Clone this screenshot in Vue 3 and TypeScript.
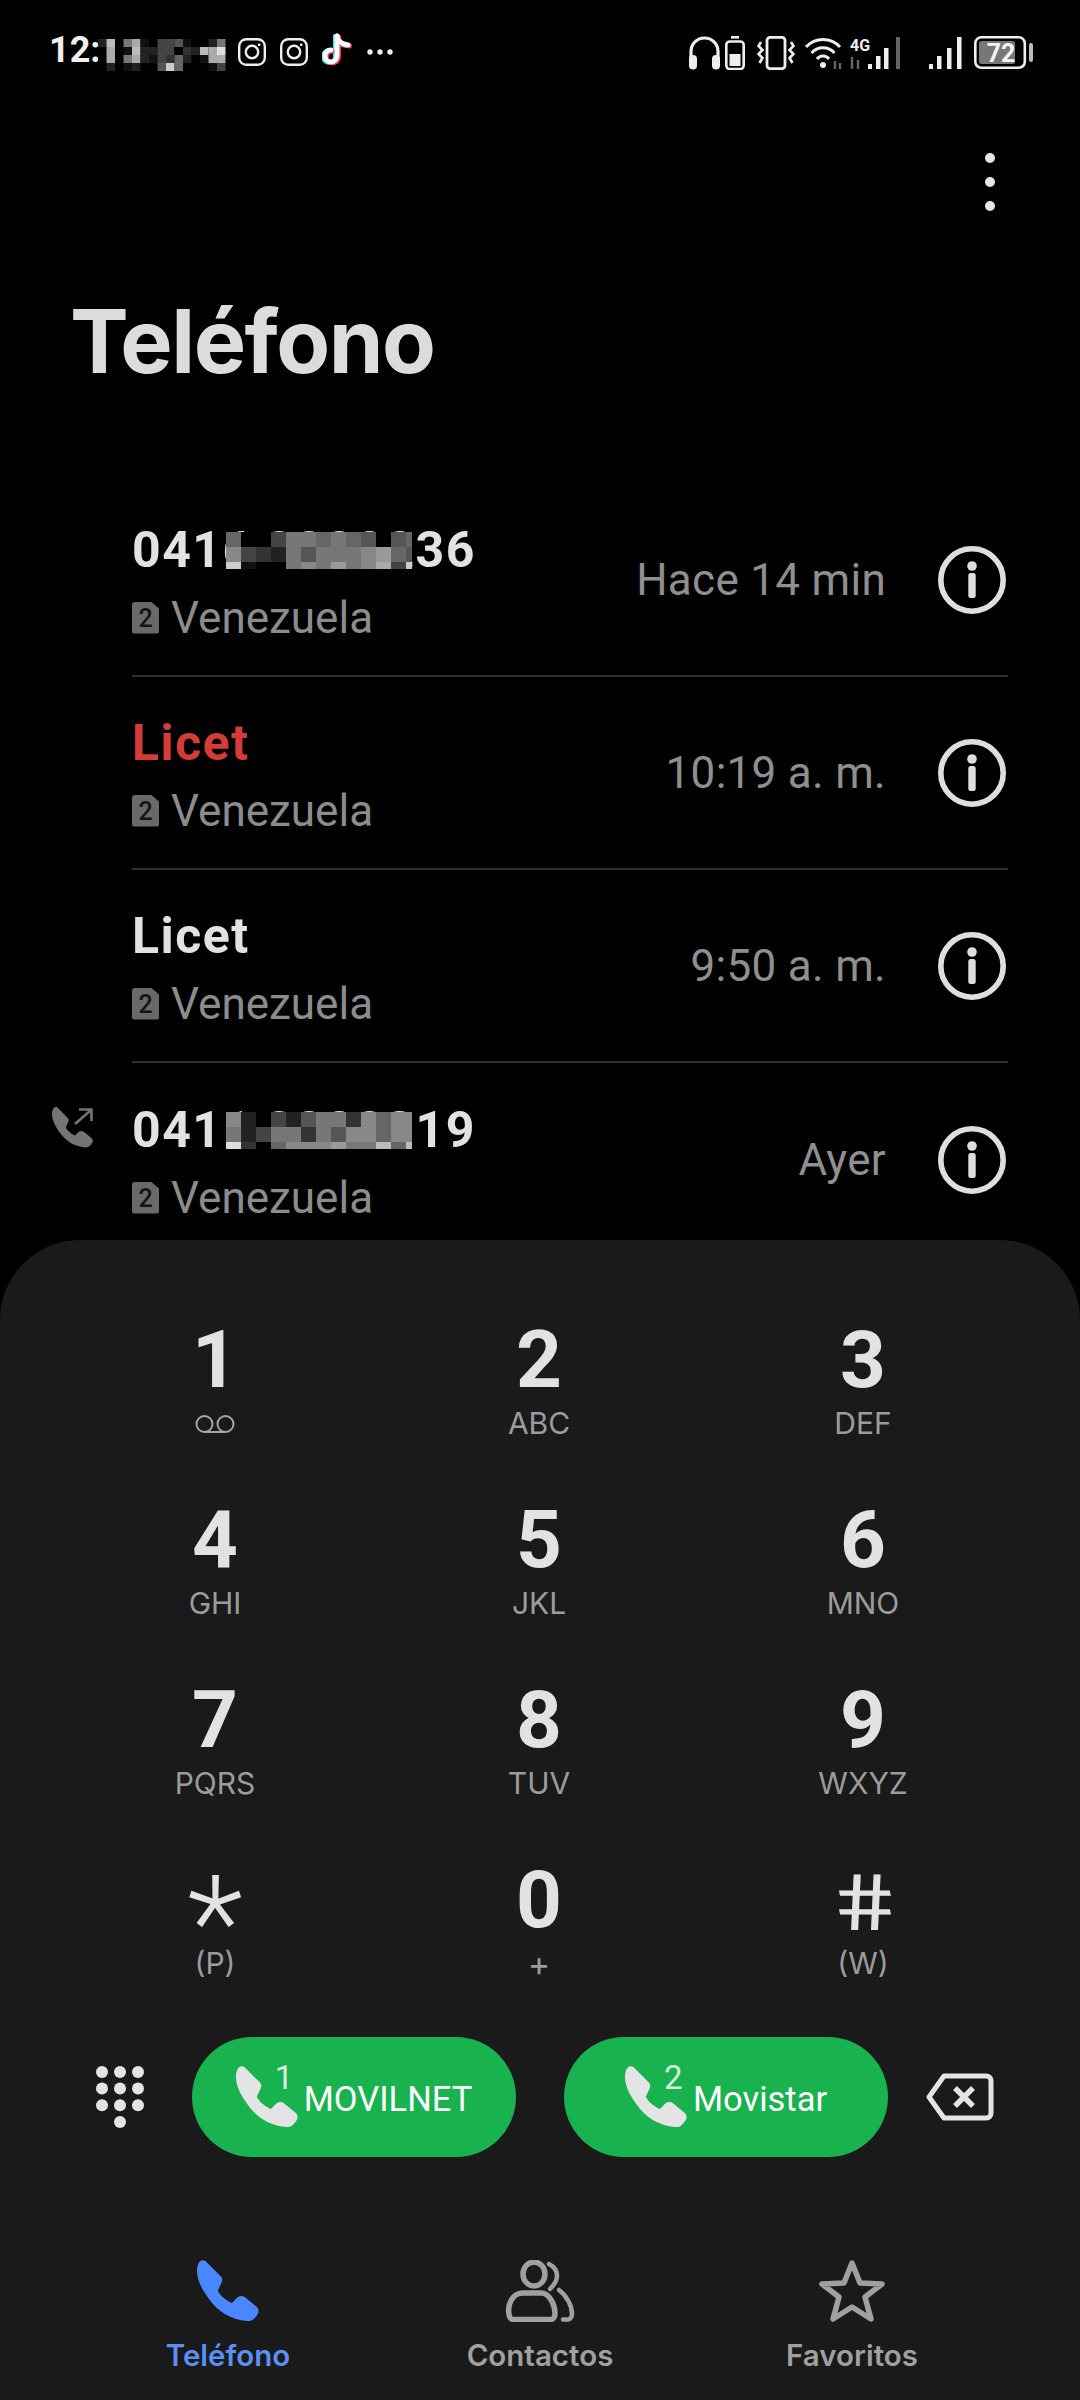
<script setup lang="ts">
const phone = 'M8 5C14-2 24 0 28 6L70 48C78 56 76 62 72 70L62 92C70 108 88 122 104 128L118 114C126 106 136 106 144 112L176 138C186 146 186 156 178 166C170 176 164 184 150 182C100 178 60 152 34 114C14 86 0 60 0 32C0 20 2 12 8 5Z'

interface Call { name: string; time: string; missed?: boolean; out?: boolean; mosaic?: string[] }
const calls: Call[] = [
  { name: '0416 0000236', time: 'Hace 14 min', mosaic: ['6004776765056c', '84327577789654', 'c100787978a4cc'] },
  { name: 'Licet', time: '10:19 a. m.', missed: true },
  { name: 'Licet', time: '9:50 a. m.' },
  { name: '0411 0000319', time: 'Ayer', out: true, mosaic: ['8204257738688c', '72477375886888', 'd306888977b6bb'] },
]
const keys = [
  { d: '1', l: '', vm: true }, { d: '2', l: 'ABC' }, { d: '3', l: 'DEF' },
  { d: '4', l: 'GHI' }, { d: '5', l: 'JKL' }, { d: '6', l: 'MNO' },
  { d: '7', l: 'PQRS' }, { d: '8', l: 'TUV' }, { d: '9', l: 'WXYZ' },
  { d: '*', l: '(P)', cls: 'star' }, { d: '0', l: '+', lcls: 'plus' }, { d: '#', l: '(W)', cls: 'hash' },
]
const statusMosaic = ['2b07a10445100' + '27', '0a01b2244032' + 'bad', '0a07a2143620' + '1aa', '02012005c600' + '014']
function cells(rows: string[], w: number, hs: number[]) {
  const out: { x: number; y: number; w: number; h: number; fill: string }[] = []
  let y = 0
  rows.forEach((r, ri) => {
    r.split('').forEach((c, i) => out.push({ x: i * w, y, w, h: hs[ri], fill: '#' + c + c + c }))
    y += hs[ri]
  })
  return out
}
const padDots = [0, 1, 2].flatMap(r => [0, 1, 2].map(c => ({ x: 6 + c * 18, y: 6 + r * 16.6 }))).concat([{ x: 24, y: 56 }])
</script>

<template>
  <div class="screen">
    <header class="status">
      <div class="status-left">
        <span class="clock">12:</span>
        <svg class="mosaic-status" width="128" height="32" viewBox="0 0 128 32">
          <rect v-for="(c, i) in cells(statusMosaic, 8.5, [8, 8, 8, 8])" :key="i" :x="c.x" :y="c.y" :width="c.w" :height="c.h" :fill="c.fill" />
        </svg>
        <svg v-for="n in 2" :key="n" class="ig" width="28" height="28" viewBox="0 0 28 28" fill="none" stroke="#eee" stroke-width="2.4">
          <rect x="1.2" y="1.2" width="25.6" height="25.6" rx="7" />
          <circle cx="14" cy="14" r="6.2" />
          <circle cx="21.2" cy="6.8" r="1.4" fill="#eee" stroke="none" />
        </svg>
        <svg class="tt" width="30" height="34" viewBox="0 0 30 34" fill="none" stroke-width="5" stroke-linecap="round">
          <path d="M15 3V23A6 6 0 1 1 9 17" stroke="#25f4ee" transform="translate(-1.5 .5)" />
          <path d="M15 3C15 8 20 11 26 12" stroke="#25f4ee" transform="translate(-1.5 .5)" />
          <path d="M15 3V23A6 6 0 1 1 9 17" stroke="#fe2c55" transform="translate(1.5 1)" />
          <path d="M15 3C15 8 20 11 26 12" stroke="#fe2c55" transform="translate(1.5 1)" />
          <path d="M15 3V23A6 6 0 1 1 9 17" stroke="#fff" />
          <path d="M15 3C15 8 20 11 26 12" stroke="#fff" />
        </svg>
        <svg class="more" width="26" height="6" viewBox="0 0 26 6" fill="#eee">
          <circle cx="3" cy="3" r="2.7" /><circle cx="13" cy="3" r="2.7" /><circle cx="23" cy="3" r="2.7" />
        </svg>
      </div>
      <div class="status-right">
        <svg width="31" height="34" viewBox="0 0 31 34" fill="none" stroke="#eee" stroke-width="3.2">
          <path d="M2 22V15.500A13.500 13.500 0 0 1 29 15.500V22" />
          <rect x="0" y="19" width="8" height="14.500" rx="4" fill="#eee" stroke="none" />
          <rect x="23" y="19" width="8" height="14.500" rx="4" fill="#eee" stroke="none" />
        </svg>
        <svg class="gap-5" width="20" height="34" viewBox="0 0 20 34" fill="none" stroke="#eee" stroke-width="2.600">
          <path d="M6 1.300H14" />
          <rect x="1.300" y="5.500" width="17.400" height="27.500" rx="3.500" />
          <rect x="4.500" y="18" width="11" height="12" fill="#eee" stroke="none" />
        </svg>
        <svg class="gap-12" width="38" height="34" viewBox="0 0 38 34" fill="none" stroke="#eee" stroke-width="2.800">
          <rect x="10" y="1.400" width="18" height="31.200" rx="3" />
          <path d="M4 6L1.500 10L5.500 14L1.500 18L5.500 22L2.500 27M34 6L36.500 10L32.500 14L36.500 18L32.500 22L35.500 27" stroke-width="2.600" />
        </svg>
        <svg class="gap-10" width="37" height="34" viewBox="0 0 37 34" fill="none" stroke="#eee" stroke-width="3">
          <path d="M1 11A23 23 0 0 1 35 11" />
          <path d="M6.500 17A15 15 0 0 1 29.500 17" />
          <path d="M12 23A7.500 7.500 0 0 1 24 23" />
          <circle cx="18" cy="29" r="3" fill="#eee" stroke="none" />
          <path d="M30 25V33M35 27V33" stroke="#666" stroke-width="2.400" />
        </svg>
        <svg class="gap-8" width="50" height="34" viewBox="0 0 50 34">
          <text x="0" y="15" class="net">4G</text>
          <path d="M2 21V33M8 24V33" stroke="#666" stroke-width="2.400" />
          <rect x="18" y="28" width="4" height="5" fill="#eee" />
          <rect x="26" y="20" width="4.500" height="13" fill="#eee" />
          <rect x="34" y="12" width="4.500" height="21" fill="#eee" />
          <rect x="46" y="1" width="4" height="32" fill="#666" />
        </svg>
        <svg class="gap-28" width="34" height="34" viewBox="0 0 34 34" fill="#eee">
          <rect x="1" y="28" width="4" height="5" /><rect x="9" y="20" width="4.500" height="13" />
          <rect x="19" y="12" width="4.500" height="21" /><rect x="29" y="1" width="4.500" height="32" />
        </svg>
        <svg class="gap-12" width="60" height="34" viewBox="0 0 60 34">
          <rect x="1.300" y="1.300" width="49.500" height="30.500" rx="6" fill="none" stroke="#eee" stroke-width="2.600" />
          <rect x="5" y="5" width="36" height="23" rx="2.500" fill="#777" />
          <rect x="55" y="7" width="4" height="19" rx="2" fill="#bbb" />
          <text x="27" y="26" class="batt">72</text>
        </svg>
      </div>
    </header>

    <div class="menu">
      <span class="menu-dots"><i></i><i></i><i></i></span>
    </div>
    <h1 class="title">Teléfono</h1>

    <section class="list">
      <div v-for="(c, idx) in calls" :key="idx" class="row" :class="{ last: idx === calls.length - 1 }">
        <svg v-if="c.out" class="out" width="44" height="44" viewBox="0 0 44 44" fill="#747474">
          <path :d="phone" transform="translate(0 1) scale(.222)" />
          <path d="M23 18L39 4M27 3.500H39.500V15" fill="none" stroke="#747474" stroke-width="2.600" />
        </svg>
        <div class="info">
          <div class="name" :class="{ missed: c.missed }">
            <span class="name-text">{{ c.name }}</span>
            <svg v-if="c.mosaic" class="mosaic" width="186" height="37" viewBox="0 0 186 37">
              <rect v-for="(m, i) in cells(c.mosaic, 15, [15, 15, 7])" :key="i" :x="m.x" :y="m.y" :width="m.w" :height="m.h" :fill="m.fill" />
            </svg>
          </div>
          <div class="sub">
            <span class="sim">2</span>
            <span>Venezuela</span>
          </div>
        </div>
        <span class="time">{{ c.time }}</span>
        <svg class="i-icon" width="68" height="68" viewBox="0 0 68 68">
          <circle cx="34" cy="34" r="31.200" fill="none" stroke="#dedede" stroke-width="5.600" />
          <circle cx="34" cy="20" r="4.800" fill="#dedede" />
          <rect x="30.300" y="27" width="7.400" height="25" rx="2.500" fill="#dedede" />
        </svg>
      </div>
    </section>

    <section class="panel">
      <div class="keypad">
        <div v-for="k in keys" :key="k.d" class="key">
          <span class="digit" :class="k.cls">{{ k.d }}</span>
          <svg v-if="k.vm" class="vm" width="40" height="18" viewBox="0 0 40 18" fill="none" stroke="#a6a6a6" stroke-width="2">
            <circle cx="9.500" cy="9" r="8" /><circle cx="30.500" cy="9" r="8" /><path d="M9.500 17H30.500" />
          </svg>
          <span v-else class="letters" :class="k.lcls">{{ k.l }}</span>
        </div>
      </div>

      <div class="calls">
        <svg width="48" height="62" viewBox="0 0 48 62" fill="#e4e4e4">
          <circle v-for="(d, i) in padDots" :key="i" :cx="d.x" :cy="d.y" r="6" />
        </svg>
        <button class="call">
          <span class="handset">
            <svg width="62" height="62" viewBox="0 0 185 185" fill="#e4e4e4"><path :d="phone" /></svg>
            <sup class="slot">1</sup>
          </span>
          <span class="call-label">MOVILNET</span>
        </button>
        <button class="call">
          <span class="handset">
            <svg width="62" height="62" viewBox="0 0 185 185" fill="#e4e4e4"><path :d="phone" /></svg>
            <sup class="slot">2</sup>
          </span>
          <span class="call-label">Movistar</span>
        </button>
        <svg class="back" width="68" height="48" viewBox="0 0 68 48" fill="none" stroke="#e4e4e4" stroke-width="5" stroke-linejoin="round" stroke-linecap="round">
          <path d="M18 3H60C63 3 65 5 65 8V40C65 43 63 45 60 45H18L3 24Z" />
          <path d="M29 15L47 33M47 15L29 33" stroke-linecap="butt" stroke-width="5.500" />
        </svg>
      </div>

      <nav class="nav">
        <div class="tab active">
          <svg width="62" height="62" viewBox="0 0 185 185" fill="#4a86ff"><path :d="phone" /></svg>
          <span>Teléfono</span>
        </div>
        <div class="tab">
          <svg width="70" height="62" viewBox="0 0 70 62" fill="none" stroke="#a0a0a0" stroke-width="5.500" stroke-linecap="round">
            <ellipse cx="29" cy="14" rx="11" ry="12" />
            <path d="M44 4C50 7 52 12 52 16C52 21 49 25 45 29" stroke-width="4.500" />
            <path d="M4 54C2 44 8 33 18 33H36C44 33 50 44 50 54C50 57 48 59.500 46 59.500H8C6 59.500 4 57 4 54Z" />
            <path d="M54 30C62 36 67 46 67 54C67 57 65 59.500 63 59.500H58" stroke-width="4.500" />
          </svg>
          <span>Contactos</span>
        </div>
        <div class="tab">
          <svg width="66" height="62" viewBox="0 0 66 62" fill="none" stroke="#a0a0a0" stroke-width="5.500" stroke-linejoin="round">
            <path d="M33 3L41 23L63 24L46 37L52 59L33 47L14 59L20 37L3 24L25 23Z" />
          </svg>
          <span>Favoritos</span>
        </div>
      </nav>
    </section>
  </div>
</template>

<style>
html, body { margin: 0; background: #000; }
</style>

<style scoped>
.screen {
  width: 1080px;
  height: 2400px;
  background: #000;
  color: #e6e6e6;
  font-family: Roboto, "Noto Sans", sans-serif;
  display: flex;
  flex-direction: column;
  overflow: hidden;
  position: relative;
}
.status {
  height: 100px;
  flex: none;
  display: flex;
  justify-content: space-between;
  align-items: center;
  padding: 0 46px 0 49px;
  box-sizing: border-box;
}
.status-left, .status-right { display: flex; align-items: center; }
.status-right { margin-top: 6px; }
.clock { font-size: 36px; font-weight: 700; color: #f0f0f0; width: 49px; }
.mosaic-status { margin-right: 12px; margin-top: 9px; }
.ig { margin-right: 14px; margin-top: 3px; }
.tt { margin-right: 15px; }
.more { margin-top: 3px; }
.gap-5 { margin-left: 5px; }
.gap-8 { margin-left: 8px; }
.gap-10 { margin-left: 10px; }
.gap-12 { margin-left: 12px; }
.gap-28 { margin-left: 28px; }
.net { font: 700 16px Roboto, sans-serif; fill: #eee; }
.batt { font: 700 25px Roboto, sans-serif; fill: #f4f4f4; text-anchor: middle; }
.menu {
  height: 116px;
  flex: none;
  display: flex;
  justify-content: flex-end;
  padding-right: 85px;
}
.menu-dots { display: flex; flex-direction: column; gap: 14px; padding-top: 53px; }
.menu-dots i { width: 10px; height: 10px; border-radius: 50%; background: #e6e6e6; display: block; }
.title {
  margin: 0;
  height: 268px;
  flex: none;
  padding-left: 70px;
  font-family: Inter, Roboto, sans-serif;
  font-size: 88px;
  font-weight: 700;
  line-height: 250px;
  letter-spacing: -1.5px;
  color: #dcdcdc;
  box-sizing: border-box;
}
.list { flex: 1; min-height: 0; overflow: hidden; padding: 0 72px 0 132px; }
.row {
  height: 193px;
  box-sizing: border-box;
  border-bottom: 2px solid #2e2e2e;
  display: flex;
  align-items: center;
  position: relative;
}
.row.last { border-bottom: 0; }
.out { position: absolute; left: -80px; top: 43px; }
.info { flex: 1; min-width: 0; padding-top: 5px; }
.name {
  font-size: 50px;
  font-weight: 700;
  letter-spacing: 1.500px;
  line-height: 56px;
  height: 56px;
  position: relative;
  white-space: pre;
  word-spacing: -2px;
  color: #e2e2e2;
}
.name.missed { color: #d63b37; }
.mosaic { position: absolute; left: 94px; top: 10px; }
.sub {
  display: flex;
  align-items: center;
  gap: 12px;
  margin-top: 15px;
  font-size: 44px;
  line-height: 50px;
  color: #8c8c8c;
}
.sim {
  width: 27px;
  height: 32px;
  background: #696969;
  border-radius: 3px;
  clip-path: polygon(0 0, 70% 0, 100% 22%, 100% 100%, 0 100%);
  color: #141414;
  font-size: 25px;
  font-weight: 500;
  line-height: 33px;
  text-align: center;
}
.time { font-size: 44px; color: #8f8f8f; margin-right: 52px; letter-spacing: .3px; }
.i-icon { flex: none; margin-right: 2px; }
.panel {
  position: absolute;
  left: 0;
  right: 0;
  top: 1240px;
  bottom: 0;
  background: #1a1a1a;
  border-radius: 80px 80px 0 0;
  padding-top: 60px;
  box-sizing: border-box;
}
.keypad {
  display: grid;
  grid-template-columns: repeat(3, 324px);
  padding-left: 53px;
}
.key { height: 180px; display: flex; flex-direction: column; align-items: center; padding-top: 14px; box-sizing: border-box; }
.digit { font-family: Roboto, sans-serif; font-size: 80px; font-weight: 700; line-height: 92px; height: 92px; color: #e2e2e2; }
.digit.star { font-size: 130px; font-weight: 300; transform: translateY(24px); }
.digit.hash { font-size: 100px; font-weight: 400; transform: translateY(3px) scaleY(.78) skewX(9deg); }
.letters { font-family: Inter, Roboto, sans-serif; font-size: 30px; line-height: 40px; margin-top: -3px; color: #9c9c9c; }
.letters.plus { font-size: 34px; margin-top: -2px; }
.vm { margin-top: 9px; }
.calls {
  display: flex;
  align-items: center;
  margin-top: 17px;
  padding-left: 96px;
  gap: 48px;
  height: 120px;
}
.call {
  width: 324px;
  height: 120px;
  background: #18b24f;
  border: 0;
  border-radius: 60px;
  display: flex;
  align-items: center;
  justify-content: center;
  gap: 6px;
  padding: 0;
  font-family: inherit;
  color: #fff;
}
.handset { position: relative; display: block; width: 62px; height: 62px; }
.handset svg { display: block; }
.slot { position: absolute; left: 39px; top: -3px; font-size: 33px; line-height: 30px; color: #d6f0df; }
.call-label { font-size: 34.5px; margin-top: 4px; }
.back { margin-left: -10px; }
.nav {
  display: grid;
  grid-template-columns: repeat(3, 312px);
  padding-left: 72px;
  margin-top: 103px;
}
.tab { display: flex; flex-direction: column; align-items: center; gap: 15px; color: #a0a0a0; font-family: Inter, Roboto, sans-serif; font-size: 29.5px; font-weight: 600; line-height: 36px; }
.tab.active { color: #5a8ff5; }
</style>
